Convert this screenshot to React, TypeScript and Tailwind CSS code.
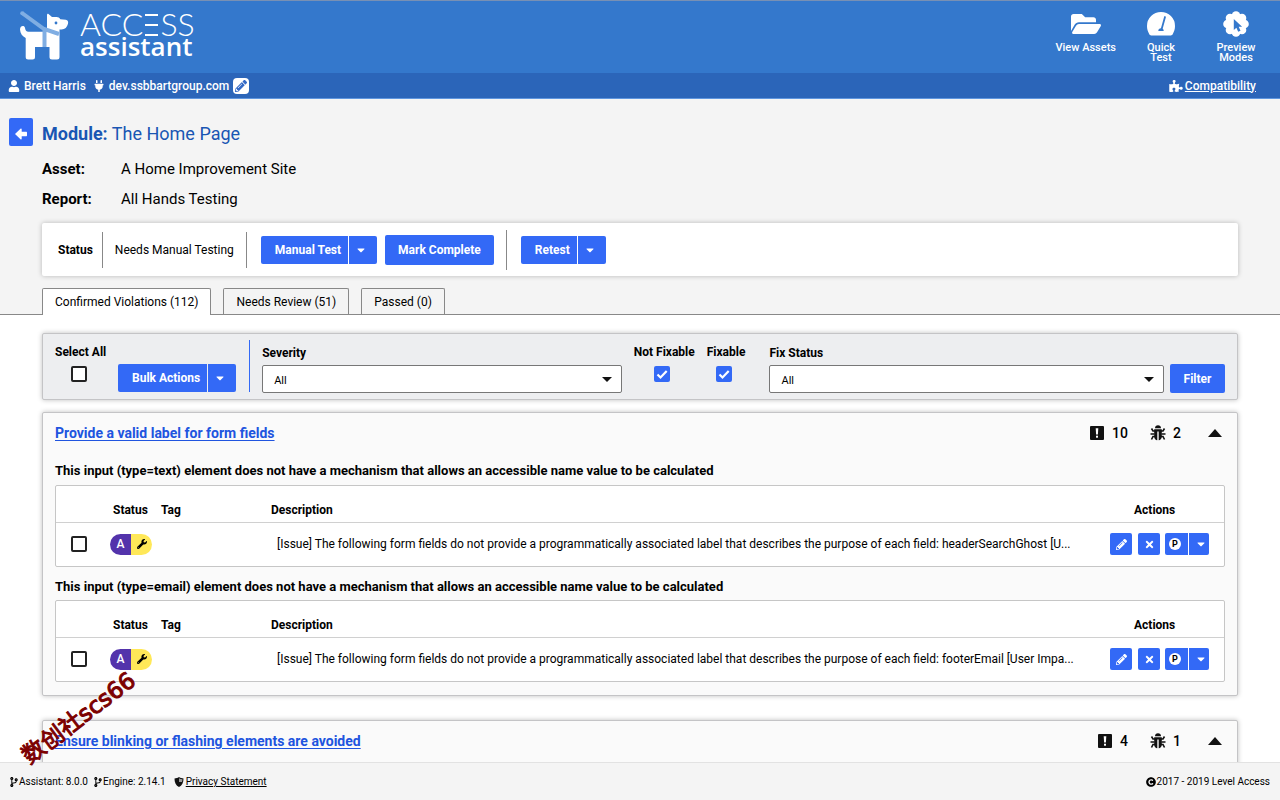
import type { ReactNode } from 'react';
import { clsx } from 'clsx';
import {
  FaCaretDown,
  FaCodeBranch,
  FaCopyright,
  FaFolderOpen,
  FaPencilAlt,
  FaPlug,
  FaPuzzlePiece,
  FaTimes,
  FaUser,
  FaWrench,
} from 'react-icons/fa';

const panelShadow = 'shadow-[0_0_5px_rgba(0,0,0,0.25)]';

const groups = [
  {
    title: 'Provide a valid label for form fields',
    violations: 10,
    bugs: 2,
    checks: [
      {
        title: 'This input (type=text) element does not have a mechanism that allows an accessible name value to be calculated',
        issue:
          '[Issue] The following form fields do not provide a programmatically associated label that describes the purpose of each field: headerSearchGhost [U...',
      },
      {
        title: 'This input (type=email) element does not have a mechanism that allows an accessible name value to be calculated',
        issue:
          '[Issue] The following form fields do not provide a programmatically associated label that describes the purpose of each field: footerEmail [User Impa...',
      },
    ],
  },
  {
    title: 'Ensure blinking or flashing elements are avoided',
    violations: 4,
    bugs: 1,
    checks: [],
  },
];

const tabs = [
  { label: 'Confirmed Violations (112)', active: true },
  { label: 'Needs Review (51)', active: false },
  { label: 'Passed (0)', active: false },
];

function Logo() {
  return (
    <div className="flex items-start gap-2.5 text-white">
      <svg viewBox="0 0 50 50" className="mt-2.5 h-[50px] w-[50px]" aria-hidden="true">
        <path
          d="M28.500 3 32 6h4.500c1.800 0 3 .8 3.800 2.300l5.500.5c1.900.3 2.800 2 2.200 4-.9 3.500-3 5.600-6.500 5.700H39.500V46c0 1.700-.8 2.500-2.500 2.500h-5c-1.700 0-2.500-.8-2.500-2.500V36H15v10c0 1.700-.8 2.500-2.500 2.500h-4.300c-1.700 0-2.500-.8-2.500-2.500V27C2.500 25.500.2 22.500 0 18.500c0-4 4.500-4.500 5-1.500.4 2.300 1.200 3.800 3.500 3.800H27V4.300c0-1.200.6-1.800 1.500-1.300Z"
          fill="#fff"
        />
        <path d="M2 2 24 18 39 23M24.500 18.500V36" fill="none" stroke="#80aee3" strokeWidth="4" />
        <circle cx="2.200" cy="2.200" r="2" fill="#80aee3" />
        <circle cx="36" cy="12" r="1.400" fill="#3478cc" />
      </svg>
      <div className="mt-2.5">
        <div className="flex items-center font-['Lato'] text-[32px] leading-[22px] font-light">
          <span>ACC</span>
          <svg viewBox="0 0 15 24" className="mx-px mt-0.5 h-6 w-[15px]" role="img" aria-label="E">
            <path d="M1 2h13M1 12h13M1 22h13" stroke="#fff" strokeWidth="2" />
          </svg>
          <span>SS</span>
        </div>
        <div className="font-['Open_Sans'] text-[26px] leading-[18px] font-semibold">assistant</div>
      </div>
    </div>
  );
}

function GaugeIcon() {
  return (
    <svg viewBox="0 0 28 24" className="h-6 w-7" aria-hidden="true">
      <path d="M14 0a14 14 0 0 1 14 14c0 3-.8 5.500-2.200 8-.5 1-1 1.400-2 1.400H4.200c-1 0-1.500-.4-2-1.400C.8 19.500 0 17 0 14A14 14 0 0 1 14 0Z" fill="#fff" />
      <path d="m18 5-3.200 11.500" stroke="#3478cc" strokeWidth="1.800" strokeLinecap="round" />
      <path d="M11.300 19c0-1.700 1-2.700 2.700-2.700s2.700 1 2.700 2.700Z" fill="#3478cc" />
    </svg>
  );
}

function PreviewIcon() {
  return (
    <svg viewBox="0 0 26 26" className="h-[26px] w-[26px]" aria-hidden="true">
      <g fill="#fff">
        <circle cx="13" cy="13" r="9.500" />
        <circle cx="13" cy="4.500" r="4.300" />
        <circle cx="19" cy="7" r="4.300" />
        <circle cx="21.500" cy="13" r="4.300" />
        <circle cx="19" cy="19" r="4.300" />
        <circle cx="13" cy="21.500" r="4.300" />
        <circle cx="7" cy="19" r="4.300" />
        <circle cx="4.500" cy="13" r="4.300" />
        <circle cx="7" cy="7" r="4.300" />
      </g>
      <path d="M10.800 8v11l2.600-2.200 1.800 4 2.300-1-1.800-4h3.400Z" fill="#3478cc" />
    </svg>
  );
}

function BackIcon() {
  return (
    <svg viewBox="0 0 12 12" className="h-3 w-3" aria-hidden="true">
      <path d="M0 6 5.500.8c.6-.5 1.200-.2 1.200.5v2.500h4.300c.7 0 1 .3 1 1v2.400c0 .7-.3 1-1 1H6.700v2.500c0 .7-.6 1-1.200.5Z" fill="#fff" />
    </svg>
  );
}

function ShieldIcon() {
  return (
    <svg viewBox="0 0 10 10" className="h-2.5 w-2.5" aria-hidden="true">
      <path d="M5 0c1.500 1 3 1.400 4.500 1.400C9.600 5.500 8 8.500 5 10 2 8.500.4 5.500.5 1.400 2 1.400 3.500 1 5 0Z" fill="#111" />
      <path d="M5 1.200c1.100.7 2.200 1 3.400 1.100 0 1-.1 1.800-.4 2.700H5Z" fill="#999" />
    </svg>
  );
}

function BugIcon() {
  return (
    <svg viewBox="0 0 16 16" className="h-4 w-4" aria-hidden="true">
      <path d="M5 3.200C5 1.200 6.200.2 8 .2s3 1 3 3Z" fill="#111" />
      <path d="M4.200 4.200h7.600v7.200c0 2.200-1.200 3.400-3.100 3.900V6.500H7.300v8.800c-1.900-.5-3.100-1.700-3.100-3.900Z" fill="#111" />
      <path
        d="M5 6H3L1.500 3.500M11 6h2l1.500-2.500M4.500 9H.5M11.500 9h4M5 11.500H3L1.500 14.500M11 11.500h2l1.500 3"
        fill="none"
        stroke="#111"
        strokeWidth="1.600"
      />
    </svg>
  );
}

function AlertIcon() {
  return (
    <svg viewBox="0 0 14 14" className="h-3.5 w-3.5" aria-hidden="true">
      <rect width="14" height="14" rx="1" fill="#111" />
      <path d="M5.700 2.200h2.600L7.900 8.500H6.100Z" fill="#fff" />
      <rect x="6" y="9.700" width="2" height="2" fill="#fff" />
    </svg>
  );
}

function SplitButton({ label }: { label: string }) {
  return (
    <div className="flex h-7 gap-px text-xs font-bold text-white">
      <button type="button" className="rounded-l-xs bg-[#3369f6] pr-[7px] pl-3.5">
        {label}
      </button>
      <button type="button" aria-label={`${label} options`} className="flex w-7 items-center justify-center rounded-r-xs bg-[#3369f6] pr-1">
        <FaCaretDown className="h-3 w-3" />
      </button>
    </div>
  );
}

function Checkbox({ label, id, checked }: { label: string; id: string; checked?: boolean }) {
  return (
    <input
      type="checkbox"
      id={id}
      aria-label={label}
      defaultChecked={checked}
      className="block h-4 w-4 appearance-none rounded-xs border-2 border-[#222] bg-white checked:border-[#3369f6] checked:bg-[#3369f6]"
    />
  );
}

function FilterCheckbox({ label, id }: { label: string; id: string }) {
  return (
    <div className="flex flex-col items-center gap-1.5">
      <label htmlFor={id}>{label}</label>
      <div className="relative mr-1">
        <Checkbox label={label} id={id} checked />
        <svg viewBox="0 0 16 16" className="pointer-events-none absolute inset-0 h-4 w-4" aria-hidden="true">
          <path d="m3.500 8.500 3 3L12.700 5" fill="none" stroke="#fff" strokeWidth="2.200" />
        </svg>
      </div>
    </div>
  );
}

function FilterSelect({ label, id, className }: { label: string; id: string; className?: string }) {
  return (
    <div className={className}>
      <label htmlFor={id} className="block leading-4">
        {label}
      </label>
      <div className="relative mt-1">
        <select id={id} className="h-7 w-full appearance-none rounded-xs border border-[#777] bg-white px-[11px] pt-1 text-[11px] font-normal">
          <option>All</option>
        </select>
        <svg viewBox="0 0 10 5" className="pointer-events-none absolute top-3 right-2.5 h-[5px] w-2.5" aria-hidden="true">
          <path d="M0 0h10L5 5Z" fill="#111" />
        </svg>
      </div>
    </div>
  );
}

function HeaderAction({ icon, label, className }: { icon: ReactNode; label: string; className?: string }) {
  return (
    <button type="button" className={clsx('flex flex-col items-center text-[11px] leading-[10px] font-medium', className)}>
      <span className="mb-[5px] flex h-7 items-center">{icon}</span>
      {label}
    </button>
  );
}

function IssueTable({ issue, id }: { issue: string; id: string }) {
  return (
    <div className="rounded-xs border border-[#c6c6c6] bg-white">
      <table className="w-full table-fixed text-left text-xs">
        <colgroup>
          <col className="w-[54px]" />
          <col className="w-[51px]" />
          <col className="w-[110px]" />
          <col />
          <col className="w-[114px]" />
        </colgroup>
        <thead>
          <tr className="h-9 border-b border-[#d0d0d0]">
            <th aria-label="Select" />
            <th className="pt-3 pl-[3px] font-bold">Status</th>
            <th className="pt-3 font-bold">Tag</th>
            <th className="pt-3 font-bold">Description</th>
            <th className="pt-3 pl-6 font-bold">Actions</th>
          </tr>
        </thead>
        <tbody>
          <tr className="h-11">
            <td className="pl-[15px]">
              <Checkbox label="Select issue" id={id} />
            </td>
            <td>
              <span className="flex h-[21px] w-[42px] overflow-hidden rounded-full">
                <span className="flex w-1/2 items-center justify-center bg-[#5333ab] text-xs font-medium text-white">A</span>
                <span className="flex w-1/2 items-center justify-center bg-[#ffe858]">
                  <FaWrench className="h-2.5 w-2.5" />
                </span>
              </span>
            </td>
            <td />
            <td className="truncate pr-6 pl-1.5">{issue}</td>
            <td>
              <div className="flex items-center text-white">
                <button type="button" aria-label="Edit" className="mr-1.5 flex h-[22px] w-[22px] items-center justify-center rounded-xs bg-[#3369f6]">
                  <FaPencilAlt className="h-[11px] w-[11px]" />
                </button>
                <button type="button" aria-label="Remove" className="mr-[5px] flex h-[22px] w-[22px] items-center justify-center rounded-xs bg-[#3369f6]">
                  <FaTimes className="h-[11px] w-[11px]" />
                </button>
                <button type="button" aria-label="Pass" className="mr-px flex h-[22px] w-[23px] items-center rounded-l-xs bg-[#3369f6] pl-1">
                  <span className="flex h-3 w-3 items-center justify-center rounded-full bg-white text-[9px] leading-3 font-bold text-black">P</span>
                </button>
                <button type="button" aria-label="More actions" className="flex h-[22px] w-5 items-center justify-center rounded-r-xs bg-[#3369f6] pl-1">
                  <FaCaretDown className="h-3 w-3" />
                </button>
              </div>
            </td>
          </tr>
        </tbody>
      </table>
    </div>
  );
}

export default function App() {
  return (
    <div className="flex h-screen flex-col overflow-hidden bg-white font-['Roboto','Liberation_Sans',sans-serif] text-black">
      <header className="shrink-0 text-white">
        <div className="flex h-[73px] justify-between border-t border-[#7890b4] bg-[#3478cc] pr-[22px] pl-5">
          <Logo />
          <div className="flex items-start pt-[9px]">
            <HeaderAction icon={<FaFolderOpen className="h-7 w-[30px]" />} label="View Assets" />
            <HeaderAction icon={<GaugeIcon />} label="Quick Test" className="ml-[27px] w-9" />
            <HeaderAction icon={<PreviewIcon />} label="Preview Modes" className="ml-[35px] w-11" />
          </div>
        </div>
        <div className="flex h-[26px] items-center justify-between border-b border-[#5f96df] bg-[#2b65b9] pr-6 pl-2 text-xs font-medium">
          <div className="flex items-center">
            <FaUser className="mr-1 h-3 w-3" />
            <span>Brett Harris</span>
            <FaPlug className="mr-1 ml-[7px] h-3 w-3" />
            <span>dev.ssbbartgroup.com</span>
            <button type="button" aria-label="Edit server" className="ml-1 flex h-4 w-4 items-center justify-center rounded-sm bg-white text-[#3369c6]">
              <FaPencilAlt className="h-3 w-3" />
            </button>
          </div>
          <a href="#compatibility" className="flex items-center gap-0.5">
            <FaPuzzlePiece className="h-3 w-3.5" />
            <span className="underline">Compatibility</span>
          </a>
        </div>
      </header>

      <main className="min-h-0 flex-1 overflow-hidden">
        <section className="bg-[#f4f4f4] pt-[19px]">
          <div className="flex items-start px-[9px]">
            <button type="button" aria-label="Back" className="mr-[9px] flex h-7 w-6 items-center justify-center rounded-xs bg-[#3369f6] pt-1 text-white">
              <BackIcon />
            </button>
            <div>
              <h1 className="pt-0.5 text-lg leading-7 text-[#1956b3]">
                <strong>Module:</strong> The Home Page
              </h1>
              <dl className="mt-1.5 grid grid-cols-[79px_auto] text-[15px] leading-[30px]">
                <dt className="font-bold">Asset:</dt>
                <dd>A Home Improvement Site</dd>
                <dt className="font-bold">Report:</dt>
                <dd>All Hands Testing</dd>
              </dl>
            </div>
          </div>

          <div className={clsx('mx-[42px] mt-[9px] flex h-[53px] items-center rounded-xs bg-white pl-4 text-xs', panelShadow)}>
            <strong className="mr-[9px]">Status</strong>
            <span className="flex h-9 items-center border-x border-[#888] px-3">Needs Manual Testing</span>
            <div className="ml-3.5 flex items-center gap-2">
              <SplitButton label="Manual Test" />
              <button type="button" className="h-[30px] rounded-xs bg-[#3369f6] px-[13px] font-bold text-white">
                Mark Complete
              </button>
            </div>
            <div className="mr-3.5 ml-3 h-10 border-l border-[#888]" />
            <SplitButton label="Retest" />
          </div>

          <div role="tablist" className="mt-3 flex gap-3 border-b border-[#888] px-[42px] text-xs">
            {tabs.map((tab) => (
              <button
                key={tab.label}
                type="button"
                role="tab"
                aria-selected={tab.active}
                className={clsx('rounded-t-xs border border-b-0 border-[#888] px-3', tab.active ? '-mb-px h-[27px] bg-white' : 'h-[26px] bg-[#f4f4f4]')}
              >
                {tab.label}
              </button>
            ))}
          </div>
        </section>

        <section className="px-[42px] pt-[18px]">
          <div className={clsx('flex h-[67px] rounded-xs border border-[#c4c4c6] bg-[#edeef0] px-3 text-xs font-bold', panelShadow)}>
            <div className="mt-1.5 flex h-[52px] border-r border-[#3369f6] pr-[13px]">
              <div className="flex w-[63px] flex-col pt-1">
                <label htmlFor="select-all">Select All</label>
                <div className="mt-1.5 pl-4">
                  <Checkbox label="Select All" id="select-all" />
                </div>
              </div>
              <div className="self-end">
                <SplitButton label="Bulk Actions" />
              </div>
            </div>
            <FilterSelect label="Severity" id="severity" className="ml-3 flex-[360] pt-[11px]" />
            <div className="mx-3 flex gap-3 pt-2.5">
              <FilterCheckbox label="Not Fixable" id="not-fixable" />
              <FilterCheckbox label="Fixable" id="fixable" />
            </div>
            <FilterSelect label="Fix Status" id="fix-status" className="ml-3 flex-[395] pt-[11px]" />
            <button type="button" className="mt-[30px] ml-1.5 h-[29px] w-[55px] rounded-xs bg-[#3369f6] text-xs text-white">
              Filter
            </button>
          </div>

          {groups.map((group, groupIndex) => (
            <article
              key={group.title}
              className={clsx(
                'rounded-xs border border-[#c4c4c6] bg-[#fafafa] px-3 pb-[13px]',
                groupIndex === 0 ? 'mt-3' : 'mt-6',
                panelShadow
              )}
            >
              <div className="flex h-10 items-center">
                <h2 className="text-sm font-bold text-[#2054df]">
                  <a href="#violation" className="underline underline-offset-2">
                    {group.title}
                  </a>
                </h2>
                <div className="ml-auto flex items-center pr-[3px] text-sm font-medium">
                  <AlertIcon />
                  <span className="ml-2">{group.violations}</span>
                  <span className="mr-[7px] ml-[22px]">
                    <BugIcon />
                  </span>
                  <span>{group.bugs}</span>
                  <button type="button" aria-label="Collapse" className="ml-[27px]">
                    <svg viewBox="0 0 14 8" className="h-2 w-3.5" aria-hidden="true">
                      <path d="M7 0l7 8H0Z" fill="#111" />
                    </svg>
                  </button>
                </div>
              </div>
              {group.checks.map((check, index) => (
                <div key={check.title}>
                  <h3 className={clsx('text-[13px] leading-4 font-bold', index === 0 ? 'mt-2.5 mb-1.5' : 'mt-3 mb-[5px]')}>{check.title}</h3>
                  <IssueTable issue={check.issue} id={`issue-${index}`} />
                </div>
              ))}
            </article>
          ))}
        </section>
      </main>

      <footer className="z-10 flex h-[38px] shrink-0 items-center justify-between border-t border-[#e2e2e2] bg-[#f4f4f4] px-2.5 text-[10px]">
        <div className="flex items-center gap-1.5">
          <span className="flex items-center gap-px">
            <FaCodeBranch className="h-2.5 w-2" />
            Assistant: 8.0.0
          </span>
          <span className="flex items-center gap-px">
            <FaCodeBranch className="h-2.5 w-2" />
            Engine: 2.14.1
          </span>
          <a href="#privacy" className="ml-0.5 flex items-center gap-0.5">
            <ShieldIcon />
            <span className="underline">Privacy Statement</span>
          </a>
        </div>
        <span className="flex items-center gap-px">
          <FaCopyright className="h-2.5 w-2.5" />
          2017 - 2019 Level Access
        </span>
      </footer>

      <div className="pointer-events-none absolute bottom-8 left-8 z-20 origin-bottom-left -rotate-[37deg] font-['DejaVu_Sans','Noto_Sans_CJK_SC',sans-serif] text-[23px] leading-6 whitespace-nowrap text-[#7c0000] [-webkit-text-stroke:1px_#7c0000]">
        数创社scs66
      </div>
    </div>
  );
}
